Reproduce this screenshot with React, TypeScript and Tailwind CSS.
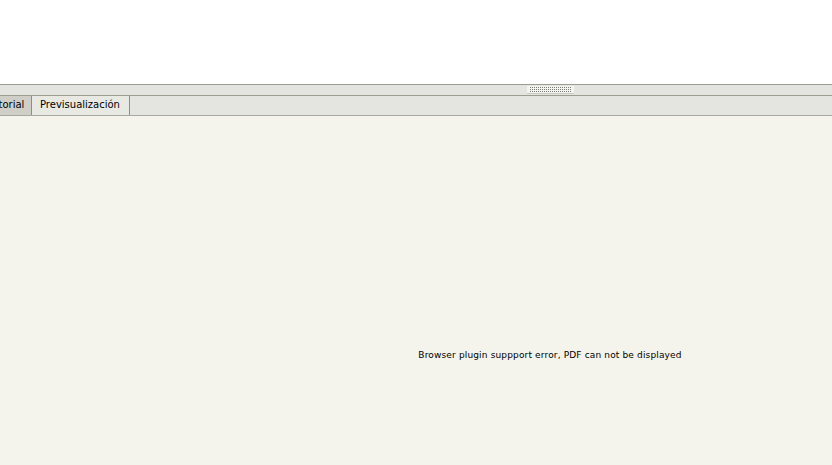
export default function App() {
  return (
    <div className="w-[832px] h-[465px] overflow-hidden bg-white" style={{ fontFamily: '"DejaVu Sans", sans-serif' }}>
      <div className="w-[1100px] flex flex-col">
        <div className="h-[84px] bg-white" />
        <div className="h-[12px] bg-[#e4e4e0] border-t border-b border-[#9d9d8f] flex justify-center">
          <div className="w-[47px] h-[8px] mt-[1px] bg-[#f4f4f0] border-b border-[#c8c8c4] flex justify-center">
            <svg width="44" height="6" viewBox="0 0 44 6" className="mt-[1px]">
              <defs>
                <pattern id="dots" width="2" height="2" patternUnits="userSpaceOnUse">
                  <rect x="0" y="0" width="1" height="1" fill="#7a7a74" />
                </pattern>
              </defs>
              <rect x="1" y="0" width="42" height="6" fill="url(#dots)" />
            </svg>
          </div>
        </div>
        <div className="h-[20px] bg-[#e4e4e0] border-b border-[#a8a8a0] flex items-stretch text-[10px] leading-[12px] text-black">
          <div className="-ml-[17px] w-[49px] bg-[#cfcfc8] border-r border-[#8e8e86] flex items-center pb-[2px]">Historial</div>
          <div className="w-[98px] bg-[#e9e9e4] border-r border-[#8e8e86] flex items-center pl-[8px] pb-[2px]">Previsualización</div>
        </div>
        <div className="h-[400px] bg-[#f5f4ec] flex justify-center pt-[234px]">
          <span className="text-[9px] leading-[10px] tracking-[0.15px] text-black">Browser plugin suppport error, PDF can not be displayed</span>
        </div>
      </div>
    </div>
  );
}
